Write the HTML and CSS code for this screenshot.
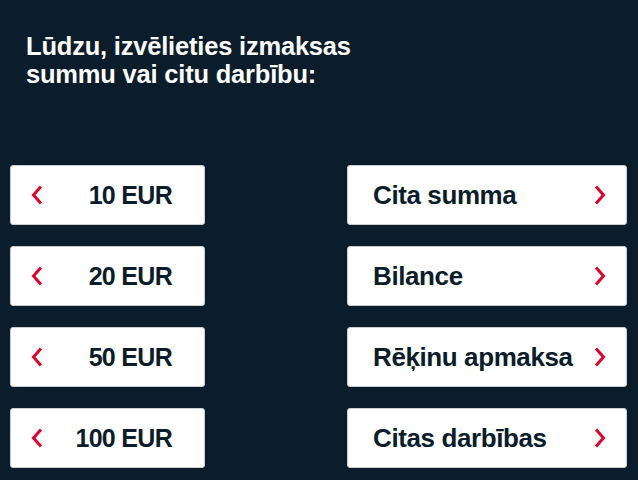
FILE: index.html
```html
<!DOCTYPE html>
<html lang="lv">
<head>
  <meta charset="UTF-8">
  <title>Izmaksa</title>
  <link rel="stylesheet" href="styles.css">
</head>
<body>
  <div class="screen">
    <h1 class="prompt">Lūdzu, izvēlieties izmaksas<br>summu vai citu darbību:</h1>
    <div class="options">
      <button class="opt opt-left">
        <svg class="chev" width="12" height="20" viewBox="0 0 12 20"><path d="M10 1.5 L2.5 10 L10 18.5" /></svg>
        <span>10 EUR</span>
      </button>
      <button class="opt opt-right">
        <span>Cita summa</span>
        <svg class="chev" width="12" height="20" viewBox="0 0 12 20"><path d="M2 1.5 L9.5 10 L2 18.5" /></svg>
      </button>
      <button class="opt opt-left">
        <svg class="chev" width="12" height="20" viewBox="0 0 12 20"><path d="M10 1.5 L2.5 10 L10 18.5" /></svg>
        <span>20 EUR</span>
      </button>
      <button class="opt opt-right">
        <span>Bilance</span>
        <svg class="chev" width="12" height="20" viewBox="0 0 12 20"><path d="M2 1.5 L9.5 10 L2 18.5" /></svg>
      </button>
      <button class="opt opt-left">
        <svg class="chev" width="12" height="20" viewBox="0 0 12 20"><path d="M10 1.5 L2.5 10 L10 18.5" /></svg>
        <span>50 EUR</span>
      </button>
      <button class="opt opt-right">
        <span>Rēķinu apmaksa</span>
        <svg class="chev" width="12" height="20" viewBox="0 0 12 20"><path d="M2 1.5 L9.5 10 L2 18.5" /></svg>
      </button>
      <button class="opt opt-left">
        <svg class="chev" width="12" height="20" viewBox="0 0 12 20"><path d="M10 1.5 L2.5 10 L10 18.5" /></svg>
        <span>100 EUR</span>
      </button>
      <button class="opt opt-right">
        <span>Citas darbības</span>
        <svg class="chev" width="12" height="20" viewBox="0 0 12 20"><path d="M2 1.5 L9.5 10 L2 18.5" /></svg>
      </button>
    </div>
  </div>
</body>
</html>
```

FILE: styles.css
```css
html, body {
  margin: 0;
  padding: 0;
  background: #0b1d2a;
}
.screen {
  width: 638px;
  height: 480px;
  overflow: hidden;
  background: #0b1d2a;
  font-family: "Liberation Sans", Arial, sans-serif;
}
.prompt {
  margin: 0;
  padding: 32px 0 0 26px;
  color: #fff;
  font-size: 25.5px;
  line-height: 28px;
  font-weight: bold;
  letter-spacing: -0.2px;
}
.options {
  display: grid;
  grid-template-columns: 195px 280px;
  grid-auto-rows: 60px;
  column-gap: 142px;
  row-gap: 21px;
  padding: 77px 0 0 10px;
}
.opt {
  display: flex;
  align-items: center;
  justify-content: space-between;
  background: #fff;
  border: 1px solid #c9ced3;
  border-radius: 3px;
  margin: 0;
  font-family: inherit;
  font-size: 26px;
  font-weight: bold;
  color: #0b1d2a;
  letter-spacing: -0.4px;
}
.opt-left {
  padding: 0 32px 0 20px;
  font-size: 25px;
  letter-spacing: -0.7px;
}
.opt-right {
  padding: 0 20px 0 25px;
}
.chev path {
  fill: none;
  stroke: #e4002b;
  stroke-width: 3;
}
```
